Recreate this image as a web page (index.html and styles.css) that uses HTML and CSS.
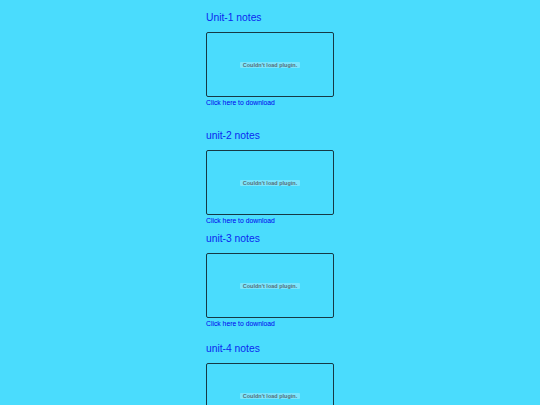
FILE: index.html
```html
<!DOCTYPE html>
<html>
<head>
<meta charset="utf-8">
<link rel="stylesheet" href="styles.css">
</head>
<body>
<main class="notes">
  <section class="unit unit-first">
    <h2 class="unit-title">Unit-1 notes</h2>
    <div class="plugin"><span class="plugin-msg">Couldn't load plugin.</span></div>
    <a class="download" href="#">Click here to download</a>
  </section>
  <section class="unit unit-wide">
    <h2 class="unit-title">unit-2 notes</h2>
    <div class="plugin"><span class="plugin-msg">Couldn't load plugin.</span></div>
    <a class="download" href="#">Click here to download</a>
  </section>
  <section class="unit unit-tight">
    <h2 class="unit-title">unit-3 notes</h2>
    <div class="plugin"><span class="plugin-msg">Couldn't load plugin.</span></div>
    <a class="download" href="#">Click here to download</a>
  </section>
  <section class="unit unit-mid">
    <h2 class="unit-title">unit-4 notes</h2>
    <div class="plugin"><span class="plugin-msg">Couldn't load plugin.</span></div>
    <a class="download" href="#">Click here to download</a>
  </section>
</main>
</body>
</html>
```
FILE: styles.css
```css
html, body {
  margin: 0;
  padding: 0;
  background: #4adcfd;
}
body {
  font-family: "Liberation Sans", Arial, sans-serif;
  overflow: hidden;
  height: 405px;
}
.notes {
  width: 128px;
  margin: 0 auto;
  display: flex;
  flex-direction: column;
}
.unit {
  display: flex;
  flex-direction: column;
  align-items: flex-start;
}
.unit-first { margin-top: 12px; }
.unit-wide { margin-top: 23px; }
.unit-tight { margin-top: 8px; }
.unit-mid { margin-top: 15px; }
.unit-title {
  margin: 0 0 8px 0;
  font-size: 10.3px;
  line-height: 12px;
  font-weight: normal;
  color: #0a28f0;
}
.plugin {
  box-sizing: border-box;
  width: 128px;
  height: 65px;
  border: 1px solid #163944;
  border-radius: 2px;
  display: flex;
  align-items: center;
  justify-content: center;
}
.plugin-msg {
  font-size: 5.5px;
  line-height: 6px;
  font-weight: bold;
  color: #55707a;
  background: rgba(255, 255, 255, 0.28);
  padding: 0 3px;
  border-radius: 1px;
}
.download {
  margin-top: 2px;
  font-size: 6.8px;
  line-height: 8px;
  color: #0000ee;
  text-decoration: none;
}
```
